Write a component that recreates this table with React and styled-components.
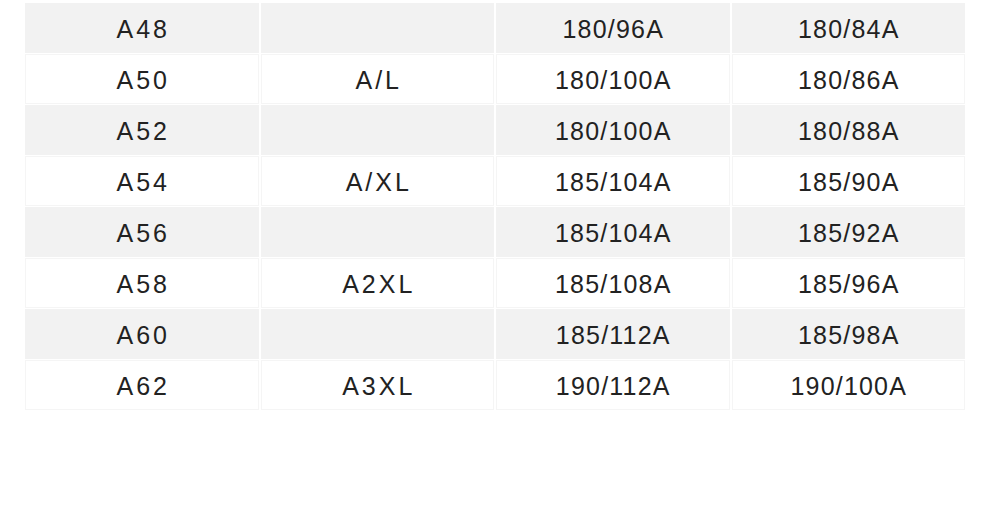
import styled, { createGlobalStyle } from "styled-components";

const GlobalStyle = createGlobalStyle`
  body {
    margin: 0;
    background: #ffffff;
    font-family: "Liberation Sans", Arial, sans-serif;
  }
`;

const rows = [
  ["A48", "", "180/96A", "180/84A"],
  ["A50", "A/L", "180/100A", "180/86A"],
  ["A52", "", "180/100A", "180/88A"],
  ["A54", "A/XL", "185/104A", "185/90A"],
  ["A56", "", "185/104A", "185/92A"],
  ["A58", "A2XL", "185/108A", "185/96A"],
  ["A60", "", "185/112A", "185/98A"],
  ["A62", "A3XL", "190/112A", "190/100A"],
];

const Page = styled.div`
  width: 990px;
  height: 525px;
  padding: 3px 25px 0;
  box-sizing: border-box;
`;

const Grid = styled.div`
  display: grid;
  grid-template-columns: repeat(4, 1fr);
  grid-auto-rows: 50px;
  column-gap: 2px;
  row-gap: 1px;
`;

const Cell = styled.div`
  display: flex;
  align-items: center;
  justify-content: center;
  box-sizing: border-box;
  background: ${({ $shaded }) => ($shaded ? "#f2f2f2" : "#ffffff")};
  border: 1px solid ${({ $shaded }) => ($shaded ? "#f2f2f2" : "#f5f5f5")};
  color: #222222;
  font-size: 25px;
  letter-spacing: ${({ $wide }) => ($wide ? "3px" : "1.2px")};
  text-indent: ${({ $wide }) => ($wide ? "3px" : "1px")};
  padding-top: 3px;
`;

export default function App() {
  return (
    <>
      <GlobalStyle />
      <Page>
        <Grid>
          {rows.map((row, i) =>
            row.map((text, j) => (
              <Cell key={`${i}-${j}`} $shaded={i % 2 === 0} $wide={j < 2}>
                {text}
              </Cell>
            ))
          )}
        </Grid>
      </Page>
    </>
  );
}
